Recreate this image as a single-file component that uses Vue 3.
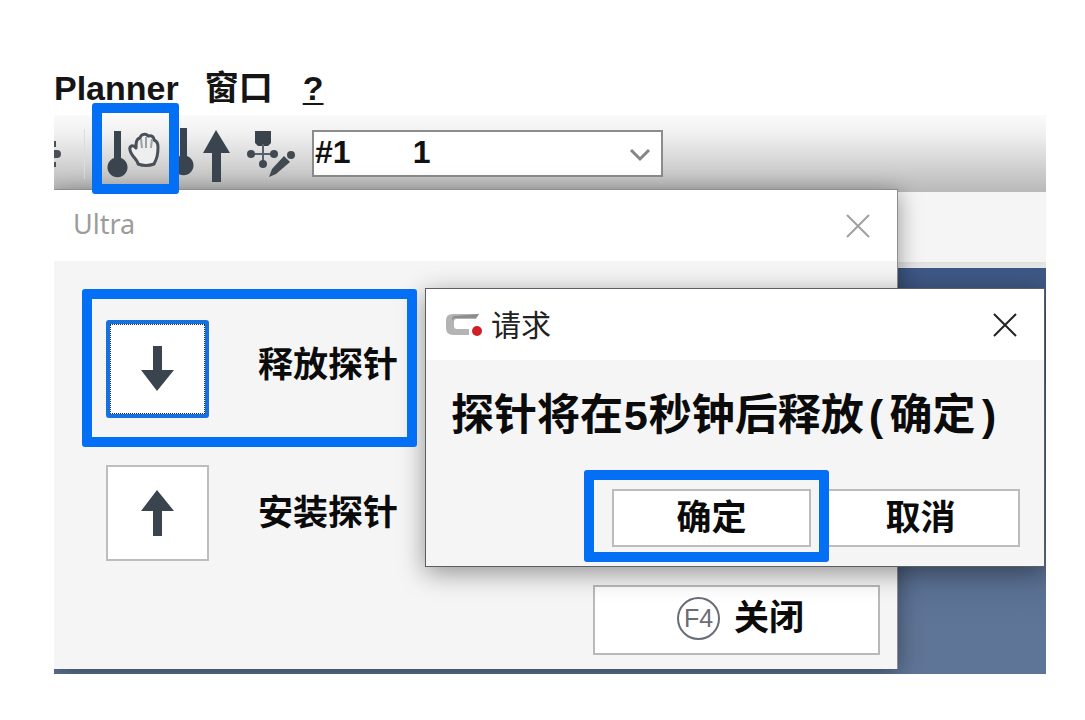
<script setup>
import { ref } from 'vue'

const probe = ref('1')
const actions = [
  { id: 'release', label: '释放探针', active: true, path: 'M12 0h9v24h12L16 45 0 24h12z' },
  { id: 'install', label: '安装探针', active: false, path: 'M16 0 33 21H21v25h-9V21H0z' },
]
</script>

<template>
  <main class="frame">
    <nav class="menu">
      <a href="#planner">Planner</a>
      <a href="#window">窗口</a>
      <a href="#help" class="help">?</a>
    </nav>

    <div class="toolbar">
      <button class="tool cut" aria-label="设置">
        <svg width="8" height="34" viewBox="0 0 8 34">
          <path d="M0 4h2v6H0zM0 13h3q4 0 4 4t-4 4H0zM0 25h2v5H0z" fill="#48505a" />
        </svg>
      </button>
      <span class="divider"></span>
      <button class="tool grab" aria-label="释放探针">
        <svg width="54" height="50" viewBox="0 0 54 50">
          <path d="M8 2h7v27a10 10 0 1 1-7 0z" fill="#39444e" />
          <path
            d="M32 35c0-4-7-8-8-14-1-4 3-6 6-2 0-5 0-9 4-10 1-4 6-5 8-2 4-1 6 1 6 4 3 1 4 4 4 7 0 8-1 11-4 17q-8 3-16 0z"
            fill="#eeeeee" stroke="#48515a" stroke-width="3" stroke-linejoin="round"
          />
          <path d="M35 10l1 9M40 8v11M46 10l-1 9" fill="none" stroke="#9ba0a5" stroke-width="2" />
        </svg>
        <span class="callout"></span>
      </button>
      <button class="tool raise" aria-label="升起探针">
        <svg width="56" height="56" viewBox="0 0 56 56">
          <path d="M5 2h7v28a10 10 0 1 1-7 0z" fill="#39444e" />
          <path d="M41 4 55 27h-9v29h-9V27h-9z" fill="#39444e" />
        </svg>
      </button>
      <button class="tool edit" aria-label="编辑探针">
        <svg width="50" height="50" viewBox="0 0 50 50">
          <path d="M8 2h16v12l-3 3H11l-3-3z" fill="#3a424b" />
          <path d="M16 15v20M4 25h24" stroke="#59616a" stroke-width="2" />
          <g fill="#414951">
            <circle cx="4" cy="25" r="4" /><circle cx="27" cy="25" r="4" />
            <circle cx="16" cy="35" r="4" />
            <circle cx="44" cy="26" r="4" />
            <path d="m37 27 6 6-14 12-7 3 3-8z" />
          </g>
        </svg>
      </button>
      <div class="picker">
        <select v-model="probe" aria-label="探针">
          <option value="1">#1&nbsp;&nbsp;&nbsp;&nbsp;&nbsp;&nbsp;&nbsp;1</option>
        </select>
        <svg class="chevron" width="22" height="14" viewBox="0 0 22 14">
          <path d="m2 2 9 9 9-9" fill="none" stroke="#858585" stroke-width="3" />
        </svg>
      </div>
    </div>

    <div class="workspace">
      <section class="panel" aria-label="Ultra">
        <header class="bar muted">
          <h1>Ultra</h1>
          <button class="dismiss" aria-label="关闭 Ultra">
            <svg width="24" height="24" viewBox="0 0 24 24"><path d="m1 1 22 22M23 1 1 23" /></svg>
          </button>
        </header>
        <div class="panel-body">
          <div v-for="a in actions" :key="a.id" class="action" :class="{ active: a.active }">
            <button :id="a.id" class="square" :aria-label="a.label">
              <svg width="33" height="46" viewBox="0 0 33 46"><path :d="a.path" fill="#3a444f" /></svg>
            </button>
            <label :for="a.id">{{ a.label }}</label>
            <span v-if="a.active" class="callout"></span>
          </div>
          <button class="close"><span class="key">F4</span>关闭</button>
        </div>
      </section>

      <section class="request" role="dialog" aria-label="请求">
        <header class="bar">
          <svg class="logo" width="39" height="26" viewBox="0 0 39 26">
            <path d="M35 2 32 7H13q-3 0-3 3v4q0 3 3 3h12v6H9q-7 0-7-7V8q0-6 7-6z" fill="#b4b4b4" />
            <path d="M35 2 32 6H12q-4 0-4 4V7q0-3 4-3z" fill="#8c8c8c" />
            <circle cx="33" cy="19" r="5" fill="#cf2026" />
          </svg>
          <h2>请求</h2>
          <button class="dismiss" aria-label="关闭请求">
            <svg width="24" height="24" viewBox="0 0 24 24"><path d="m1 1 22 22M23 1 1 23" /></svg>
          </button>
        </header>
        <p class="message">探针将在5秒钟后释放(确定)</p>
        <div class="answers">
          <div class="marked">
            <button class="answer">确定</button>
            <span class="callout"></span>
          </div>
          <button class="answer">取消</button>
        </div>
      </section>
    </div>
  </main>
</template>

<style>
body { background: #fff; }
</style>

<style scoped>
* { box-sizing: border-box; }
.frame {
  margin: 60px 39px 0 54px;
  overflow: hidden;
  font-family: "Liberation Sans", "Noto Sans CJK SC", sans-serif;
  color: #0b0b0b;
}
button {
  font: inherit;
  color: inherit;
  border: 0;
  padding: 0;
  background: none;
}
svg { display: block; }
h1, h2, p { margin: 0; }
.callout {
  position: absolute;
  z-index: 3;
  border: 10px solid #036ff5;
  border-radius: 3px;
  pointer-events: none;
}

.menu {
  display: flex;
  height: 55px;
  gap: 26px;
  line-height: 56px;
  font-size: 34px;
  font-weight: 700;
}
.menu a { color: #151515; text-decoration: none; }
.menu .help { margin-left: 4px; text-decoration: underline; text-decoration-thickness: 2px; text-underline-offset: 3px; }

.toolbar {
  display: flex;
  align-items: center;
  height: 77px;
  background: linear-gradient(#fafafa, #f0f0f0 25%, #b9b9b9);
}
.tool { position: relative; z-index: 2; display: flex; justify-content: center; }
.cut { width: 30px; justify-content: flex-start; }
.divider { width: 1px; height: 50px; background: #dcdcdc; }
.grab { width: 76px; height: 77px; margin-left: 10px; margin-right: 3px; align-items: center; }
.grab .callout { inset: -12px 0 -2px -3px; width: 87px; }
.raise { width: 58px; margin-right: 13px; z-index: 1; }
.edit { width: 54px; margin-right: 13px; }
.picker { position: relative; width: 351px; }
.picker select {
  appearance: none;
  display: block;
  width: 100%;
  height: 47px;
  padding: 0 40px 3px 1px;
  border: 2px solid #8c8c8c;
  border-radius: 0;
  background: #fff;
  color: #111;
  font: 700 32px "Liberation Sans", sans-serif;
}
.chevron { position: absolute; right: 12px; top: 18px; pointer-events: none; }

.workspace {
  position: relative;
  display: flow-root;
  background: linear-gradient(#f5f5f5 70px, #e0e0e0 70px, #e8e8e8 76px, #3e5886 76px, #455b83 190px, #5f7597 440px);
}
.panel {
  margin: -3px 148px 5px 0;
  border: solid #8d8d8d;
  border-width: 1px 1px 0 0;
  background: #f5f5f5;
  box-shadow: 0 4px 22px rgba(0, 0, 0, .4);
}
.bar {
  display: flex;
  align-items: center;
  height: 71px;
  background: #fff;
}
.bar h1, .bar h2 { flex: 1; padding-bottom: 4px; }
.bar h1 { padding-left: 19px; font: 400 27px "Noto Sans", sans-serif; color: #9c9c9c; }
.bar h2 { font-size: 30px; font-weight: 400; color: #222; }
.dismiss { margin-right: 27px; }
.dismiss path { fill: none; stroke: #222; stroke-width: 2; }
.muted .dismiss path { stroke: #a0a0a0; }
.logo { margin: 0 8px 0 18px; }

.panel-body {
  display: flex;
  flex-direction: column;
  padding: 59px 17px 14px 52px;
}
.action {
  position: relative;
  display: flex;
  align-items: center;
  align-self: flex-start;
  gap: 49px;
  margin-bottom: 24px;
  font-size: 35px;
  font-weight: 700;
  line-height: 40px;
}
.action.active { margin-bottom: 47px; }
.action.active label { padding-bottom: 8px; }
.action .callout { inset: -31px -19px -29px -24px; }
.square {
  display: flex;
  align-items: center;
  justify-content: center;
  width: 103px;
  height: 96px;
  border: 2px solid #bdbdbd;
  background: #fff;
}
.active .square {
  height: 98px;
  border: 4px solid #1670dd;
  border-radius: 3px;
  outline: 1px dotted #1b2a44;
  outline-offset: -5px;
}
.close {
  display: flex;
  align-items: center;
  justify-content: center;
  gap: 14px;
  align-self: flex-end;
  width: 287px;
  height: 70px;
  padding: 0 0 4px 8px;
  border: 2px solid #b9b9b9;
  background: #fff;
  font-size: 35px;
  font-weight: 700;
  line-height: 44px;
}
.key {
  width: 43px;
  height: 43px;
  border: 2px solid #6b6d76;
  border-radius: 50%;
  color: #6b6d76;
  font: 400 25px/39px "Liberation Sans", sans-serif;
  text-align: center;
}

.request {
  position: absolute;
  top: 96px;
  right: 1px;
  width: 620px;
  border: 1px solid #5a5e66;
  background: #f5f5f5;
  box-shadow: 0 6px 24px rgba(0, 0, 0, .4);
}
.message {
  padding: 29px 0 0 25px;
  font: 700 43px/60px "Liberation Mono", "Noto Sans CJK SC", monospace;
  white-space: nowrap;
}
.answers {
  display: flex;
  justify-content: flex-end;
  gap: 10px;
  padding: 40px 24px 19px 0;
}
.marked { position: relative; }
.marked .callout { inset: -19px -18px -15px -28px; }
.answer {
  display: block;
  width: 199px;
  height: 58px;
  border: 2px solid #bcbcbc;
  background: #fff;
  font-size: 35px;
  font-weight: 700;
  line-height: 50px;
}
</style>
